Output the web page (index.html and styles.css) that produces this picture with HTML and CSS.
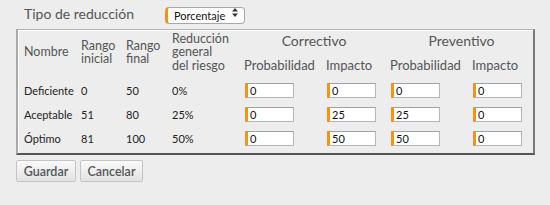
FILE: index.html
```html
<!DOCTYPE html>
<html>
<head>
  <meta charset="UTF-8">
  <title>Reducción del riesgo</title>
  <link rel="stylesheet" href="styles.css">
</head>
<body>
  <div class="type-row">
    <label for="tipo">Tipo de reducción</label>
    <span class="select-wrap">
      <select id="tipo">
        <option>Porcentaje</option>
        <option>Valor</option>
      </select>
      <svg class="arrows" width="6" height="9" viewBox="0 0 6 9">
        <path d="M3 0 L6 3.5 L0 3.5 Z M3 9 L6 5.5 L0 5.5 Z" fill="#333"/>
      </svg>
    </span>
  </div>

  <fieldset class="levels">
    <table>
      <colgroup>
        <col style="width: 57px">
        <col style="width: 45px">
        <col style="width: 46px">
        <col style="width: 72px">
        <col style="width: 82px">
        <col style="width: 64px">
        <col style="width: 82px">
        <col style="width: 67px">
      </colgroup>
      <thead>
        <tr class="group-row">
          <th rowspan="2" class="side">Nombre</th>
          <th rowspan="2" class="side">Rango<br>inicial</th>
          <th rowspan="2" class="side">Rango<br>final</th>
          <th rowspan="2" class="side">Reducción<br>general<br>del riesgo</th>
          <th colspan="2" class="group">Correctivo</th>
          <th colspan="2" class="group">Preventivo</th>
        </tr>
        <tr class="sub-row">
          <th>Probabilidad</th>
          <th>Impacto</th>
          <th>Probabilidad</th>
          <th>Impacto</th>
        </tr>
      </thead>
      <tbody>
        <tr>
          <td>Deficiente</td>
          <td>0</td>
          <td>50</td>
          <td>0%</td>
          <td><input type="text" value="0"></td>
          <td><input type="text" value="0"></td>
          <td><input type="text" value="0"></td>
          <td><input type="text" value="0"></td>
        </tr>
        <tr>
          <td>Aceptable</td>
          <td>51</td>
          <td>80</td>
          <td>25%</td>
          <td><input type="text" value="0"></td>
          <td><input type="text" value="25"></td>
          <td><input type="text" value="25"></td>
          <td><input type="text" value="0"></td>
        </tr>
        <tr>
          <td>Óptimo</td>
          <td>81</td>
          <td>100</td>
          <td>50%</td>
          <td><input type="text" value="0"></td>
          <td><input type="text" value="50"></td>
          <td><input type="text" value="50"></td>
          <td><input type="text" value="0"></td>
        </tr>
      </tbody>
    </table>
  </fieldset>

  <div class="actions">
    <button>Guardar</button>
    <button>Cancelar</button>
  </div>
</body>
</html>
```

FILE: styles.css
```css
body {
  margin: 0;
  background-color: #ededed;
  font-family: Lato, "Liberation Sans", sans-serif;
  color: #222;
}
.type-row {
  display: flex;
  align-items: center;
  height: 27px;
  padding-left: 24px;
}
.type-row label {
  font-size: 14px;
  color: #555;
  width: 141px;
}
.select-wrap {
  position: relative;
  display: inline-block;
}
.select-wrap select {
  -webkit-appearance: none;
  appearance: none;
  width: 80px;
  height: 17px;
  margin: 0;
  padding: 0 0 0 6px;
  background: #fff;
  border: 1px solid #a8a8a8;
  border-left: 3px solid #f7930f;
  border-radius: 4px;
  font-family: inherit;
  font-size: 11px;
  color: #111;
}
.arrows {
  position: absolute;
  right: 7px;
  top: 4px;
}
.levels {
  margin: 2px 15px 0 16px;
  padding: 0 0 3px 0;
  border-style: solid;
  border-width: 1px 2px 2px 2px;
  border-color: #b0b0b0 #7a7a7a #555 #a9a9a9;
  box-shadow: inset 1px 1px 0 #fff;
  min-width: 0;
}
table {
  border-collapse: collapse;
  table-layout: fixed;
  width: 515px;
}
th {
  font-weight: normal;
  text-align: left;
  color: #555;
  font-size: 13px;
  line-height: 13px;
  padding: 0 0 0 6px;
}
th.side {
  vertical-align: middle;
  font-size: 12.5px;
  line-height: 13.5px;
  padding-bottom: 4px;
}
th.group {
  text-align: center;
  font-size: 14px;
  height: 20px;
  vertical-align: middle;
}
.sub-row th {
  height: 22px;
  vertical-align: bottom;
  padding-bottom: 6px;
}
td {
  font-size: 11px;
  height: 24px;
  padding: 0 0 0 6px;
  vertical-align: middle;
}
td input {
  box-sizing: border-box;
  width: 49px;
  height: 15px;
  margin: 0 0 0 1px;
  padding: 0 0 0 2px;
  border: 1px solid #b5b5b5;
  border-top-color: #a0a0a0;
  border-left: 3px solid #f7930f;
  background: #fff;
  font-family: inherit;
  font-size: 11px;
  color: #111;
  display: block;
}
.actions {
  display: flex;
  gap: 4px;
  padding: 5px 0 0 16px;
}
.actions button {
  height: 22px;
  padding: 0 6px;
  border: 1px solid #c4c4c4;
  border-radius: 2px;
  background: linear-gradient(#fafafa, #e2e2e2);
  font-family: inherit;
  font-size: 12.5px;
  font-weight: 600;
  color: #555;
}
.actions button:first-child {
  width: 60px;
}
.actions button:last-child {
  width: 63px;
}
```
